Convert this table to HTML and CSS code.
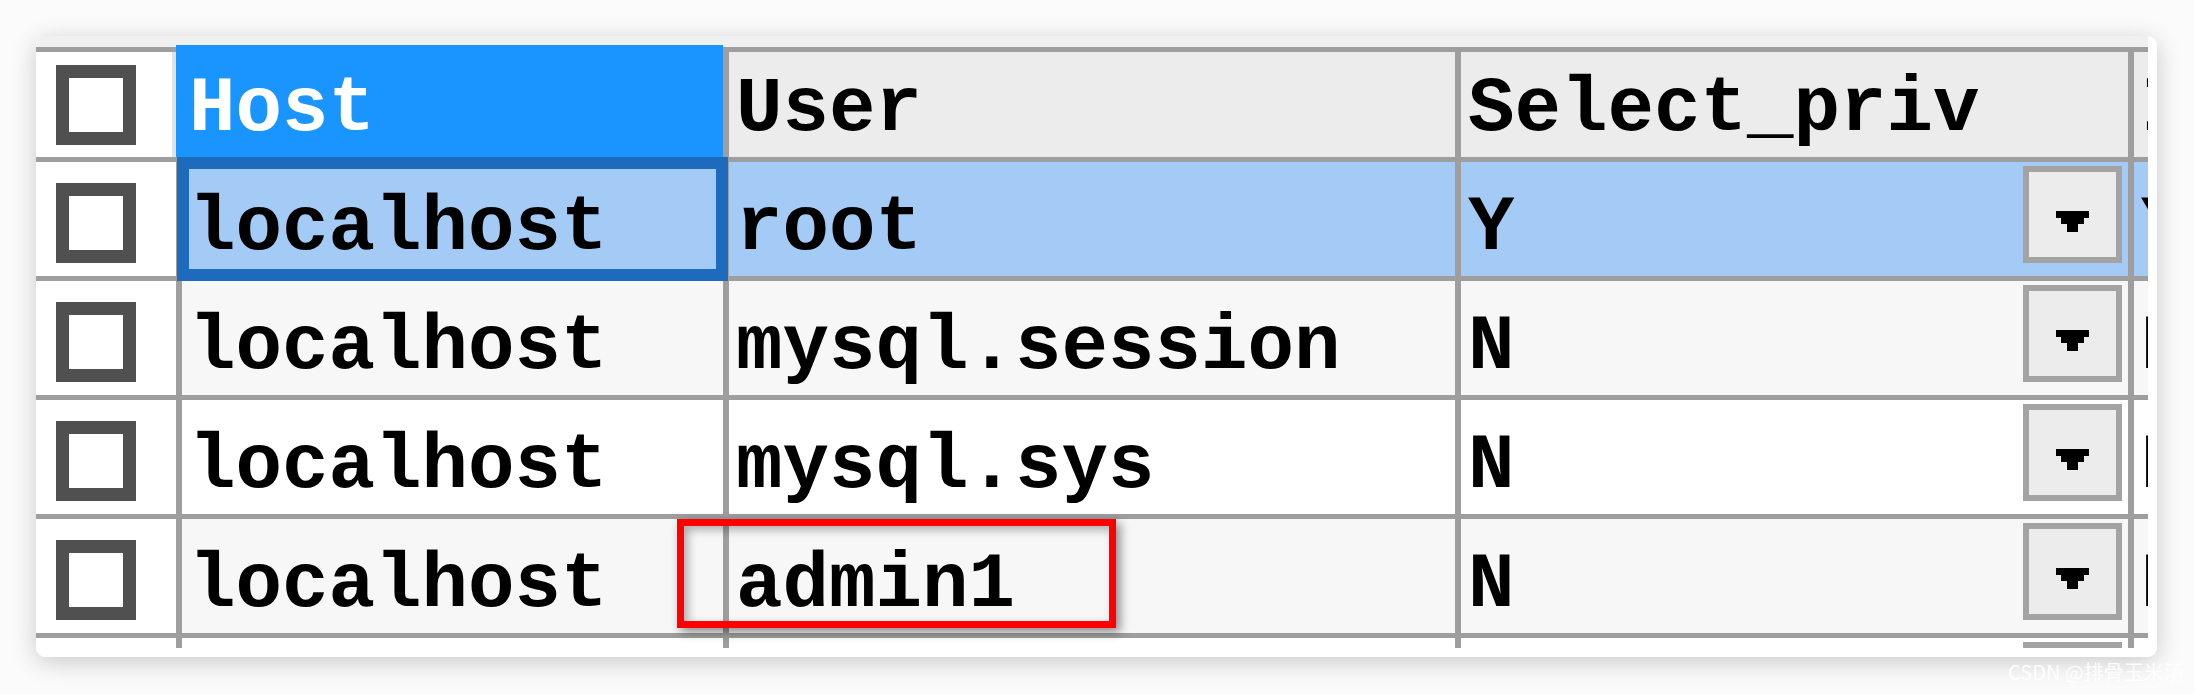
FILE: index.html
```html
<!DOCTYPE html>
<html lang="zh">
<head>
<meta charset="utf-8">
<title>mysql.user</title>
<link rel="stylesheet" href="styles.css">
</head>
<body>
<div class="page">
  <div class="card">
    <div class="shot">
      <div class="grid">
        <div class="cell corner"><span class="cb"></span></div>
        <div class="cell head head-active">Host</div>
        <div class="cell head">User</div>
        <div class="cell head">Select_priv</div>
        <div class="cell head">Insert_priv</div>

        <div class="cell chk"><span class="cb"></span></div>
        <div class="cell sel focus">localhost</div>
        <div class="cell sel">root</div>
        <div class="cell sel enum"><span>Y</span><span class="dd"><svg width="33" height="21" viewBox="0 0 33 21"><path d="M0 0H33V7H28V13H22V21H11V13H5V7H0Z" fill="#000"/></svg></span></div>
        <div class="cell sel">Y</div>

        <div class="cell chk"><span class="cb"></span></div>
        <div class="cell alt">localhost</div>
        <div class="cell alt">mysql.session</div>
        <div class="cell alt enum"><span>N</span><span class="dd"><svg width="33" height="21" viewBox="0 0 33 21"><path d="M0 0H33V7H28V13H22V21H11V13H5V7H0Z" fill="#000"/></svg></span></div>
        <div class="cell alt">N</div>

        <div class="cell chk"><span class="cb"></span></div>
        <div class="cell">localhost</div>
        <div class="cell">mysql.sys</div>
        <div class="cell enum"><span>N</span><span class="dd"><svg width="33" height="21" viewBox="0 0 33 21"><path d="M0 0H33V7H28V13H22V21H11V13H5V7H0Z" fill="#000"/></svg></span></div>
        <div class="cell">N</div>

        <div class="cell chk"><span class="cb"></span></div>
        <div class="cell alt">localhost</div>
        <div class="cell alt">admin1</div>
        <div class="cell alt enum"><span>N</span><span class="dd"><svg width="33" height="21" viewBox="0 0 33 21"><path d="M0 0H33V7H28V13H22V21H11V13H5V7H0Z" fill="#000"/></svg></span></div>
        <div class="cell alt">N</div>

        <div class="cell chk"><span class="cb"></span></div>
        <div class="cell"></div>
        <div class="cell"></div>
        <div class="cell enum"><span></span><span class="dd"></span></div>
        <div class="cell"></div>
      </div>
    </div>
    <div class="mark"></div>
  </div>
  <div class="watermark">CSDN @排骨玉米汤</div>
</div>
</body>
</html>
```

FILE: styles.css
```css
html, body {
  margin: 0;
  padding: 0;
}
body {
  width: 2194px;
  height: 694px;
  overflow: hidden;
  background: #fbfbfb;
}
.page {
  position: relative;
  box-sizing: border-box;
  width: 2194px;
  height: 694px;
  padding: 36px 37px 37px 36px;
}
.card {
  position: relative;
  width: 2121px;
  height: 621px;
  background: #fff;
  border-radius: 9px;
  overflow: hidden;
  box-shadow: 0 5px 26px rgba(0, 0, 0, 0.2);
}
.shot {
  box-sizing: border-box;
  width: 2112px;
  height: 612px;
  overflow: hidden;
  background: #f0f0f0;
  padding-top: 11px;
}
.grid {
  display: grid;
  width: max-content;
  grid-template-columns: 140px 541px 726px 667px 300px;
  grid-template-rows: 105px repeat(5, 114px);
  column-gap: 6px;
  row-gap: 5px;
  padding-top: 5px;
  background: #9e9e9e;
}
.cell {
  display: flex;
  align-items: flex-end;
  box-sizing: border-box;
  padding: 0 0 9px 7px;
  background: #fff;
  color: #000;
  font-family: "Liberation Mono", "DejaVu Sans Mono", monospace;
  font-size: 77.5px;
  font-weight: bold;
  line-height: 1;
  white-space: nowrap;
  overflow: hidden;
}
.head {
  background: #ececec;
}
.head-active {
  background: #1a94ff;
  color: #fff;
  margin-top: -7px;
  margin-left: -6px;
  padding-left: 13px;
}
.corner {
  align-items: center;
  padding: 0 0 0 20px;
  border-right: 4px solid #e2e2e2;
}
.chk {
  align-items: center;
  padding: 7px 0 0 20px;
}
.cb {
  display: block;
  box-sizing: border-box;
  width: 80px;
  height: 80px;
  border: 13px solid #505050;
  background: #fff;
}
.sel {
  background: #a3cbf5;
}
.alt {
  background: #f7f7f7;
}
.focus {
  overflow: visible;
  outline: 12px solid #1e6bbd;
  outline-offset: -7px;
}
.enum {
  justify-content: space-between;
}
.dd {
  align-self: center;
  display: flex;
  align-items: center;
  justify-content: center;
  box-sizing: border-box;
  width: 99px;
  height: 97px;
  margin-right: 6px;
  padding-top: 14px;
  border: 6px solid #a3a3a3;
  background: #ececec;
}
.dd svg {
  display: block;
}
.mark {
  position: absolute;
  left: 641px;
  top: 483px;
  box-sizing: border-box;
  width: 439px;
  height: 109px;
  border: 7px solid #ff0000;
  box-shadow: 4px 4px 10px rgba(0, 0, 0, 0.45), inset 4px 4px 10px rgba(0, 0, 0, 0.3);
}
.watermark {
  position: absolute;
  left: 2008px;
  top: 660px;
  font-family: "Noto Sans CJK SC", "Noto Sans", sans-serif;
  font-size: 20px;
  line-height: 24px;
  color: rgba(255, 255, 255, 0.92);
  white-space: nowrap;
}
```
